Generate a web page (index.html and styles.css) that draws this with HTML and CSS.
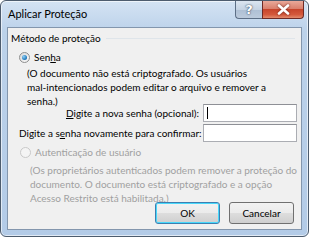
FILE: index.html
```html
<!DOCTYPE html>
<html>
<head>
<meta charset="utf-8">
<link rel="stylesheet" href="styles.css">
</head>
<body>
<div class="window">
  <div class="titlebar">
    <div class="title">Aplicar Proteção</div>
    <div class="tbuttons">
      <div class="tb help">?</div>
      <div class="tb close"><svg width="13" height="11" viewBox="0 0 13 11"><path d="M2 1.5 L11 9.5 M11 1.5 L2 9.5" stroke="#fff" stroke-width="2.6" stroke-linecap="round"/></svg></div>
    </div>
  </div>
  <div class="client">
    <div class="group-head"><span>Método de proteção</span><span class="gline"></span></div>
    <div class="radio-row">
      <span class="radio checked"><span class="dot"></span></span>
      <span>Sen<u>h</u>a</span>
    </div>
    <div class="desc">(O documento não está criptografado. Os usuários<br>mal-intencionados podem editar o arquivo e remover a<br>senha.)</div>
    <div class="field-row">
      <span class="lbl right"><u>D</u>igite a nova senha (opcional):</span>
      <span class="input"><span class="caret"></span></span>
    </div>
    <div class="field-row second">
      <span class="lbl">Digite a s<u>e</u>nha novamente para confirmar:</span>
      <span class="input"></span>
    </div>
    <div class="radio-row disabled">
      <span class="radio off"></span>
      <span>Autenticação de usuário</span>
    </div>
    <div class="desc disabled d2">(Os proprietários autenticados podem remover a proteção do<br>documento. O documento está criptografado e a opção<br>Acesso Restrito está habilitada.)</div>
    <div class="buttons">
      <div class="btn default">OK</div>
      <div class="btn">Cancelar</div>
    </div>
  </div>
</div>
</body>
</html>
```
FILE: styles.css
```css
html, body { margin: 0; padding: 0; background: #ffffff; }
body { font-family: "Lato", "Liberation Sans", sans-serif; font-size: 10px; color: #000; white-space: nowrap; }
.window {
  width: 309px; height: 237px; box-sizing: border-box;
  border: 1px solid #4d5c6e; border-radius: 6px;
  background: linear-gradient(180deg, #d4e3f3 0px, #bcd2ea 30px, #b3cbe7 100%);
  padding: 0 6px 6px 6px;
  display: flex; flex-direction: column;
  box-shadow: inset 0 0 0 1px rgba(255,255,255,0.6);
}
.titlebar { height: 26px; display: flex; justify-content: space-between; align-items: flex-start; flex: none; }
.title { font-size: 11px; padding: 6px 0 0 1px; color: #000; }
.tbuttons { display: flex; margin-right: -2px; }
.tb { height: 18px; box-sizing: border-box; border: 1px solid #5d6f86; border-top: none; display: flex; align-items: center; justify-content: center; }
.help { width: 27px; border-radius: 0 0 0 4px; background: linear-gradient(180deg, #dbe5f0 0%, #c5d3e3 50%, #aebfd4 51%, #bccbdc 100%); color: #fff; font-weight: bold; font-size: 13px; text-shadow: 0 0 2px #3d4f66, 0 0 1px #3d4f66; border-right: none; font-family: "DejaVu Sans", sans-serif; }
.close { width: 42px; border-radius: 0 0 4px 0; border-color: #6e2a25; background: linear-gradient(180deg, #e9a99a 0%, #d9806d 45%, #c7452c 50%, #d4593c 80%, #e28b6d 100%); }
.close svg { filter: drop-shadow(0 0 1px #6b1f14); }
.client {
  flex: 1; background: #f0f0f0; border: 1px solid #8396ad;
  padding: 2px 0 0 0; box-sizing: border-box; overflow: hidden;
}
.group-head { display: flex; align-items: center; padding-left: 3px; height: 16px; }
.gline { flex: 1; height: 0; border-top: 1px solid #dfe5ea; margin: 1px 6px 0 5px; }
.radio-row { display: flex; align-items: center; height: 16px; margin-top: 3px; padding-left: 11px; gap: 4px; }
.radio { width: 11px; height: 11px; border-radius: 50%; box-sizing: border-box; border: 1px solid #8e8f8f; background: linear-gradient(135deg, #d9d9d9, #fafafa); display: flex; align-items: center; justify-content: center; flex: none; }
.radio .dot { width: 5px; height: 5px; border-radius: 50%; background: radial-gradient(circle at 35% 35%, #8fd0f5, #1a73b8 70%, #0d4a86); }
.radio.off { border-color: #c9c9c9; background: #f4f4f4; }
.desc { padding-left: 19px; line-height: 14px; margin-top: 1px; }
.field-row { display: flex; align-items: center; height: 18px; margin-top: -4px; padding-right: 4px; }
.field-row.second { margin-top: 2px; }
.lbl { flex: 1; padding-left: 11px; }
.lbl.right { text-align: right; padding-right: 4px; }
.input { width: 94px; height: 18px; box-sizing: border-box; border: 1px solid #abadb3; border-top-color: #8e9096; background: #fff; position: relative; flex: none; }
.caret { position: absolute; left: 3px; top: 2px; width: 1px; height: 12px; background: #000; }
.disabled { color: #a0a0a0; }
.radio-row.disabled { margin-top: 2px; padding-left: 12px; }
.d2 { padding-left: 22px; margin-top: 3px; }
.buttons { display: flex; justify-content: flex-end; gap: 9px; padding-right: 7px; margin-top: -3px; }
.btn { width: 65px; height: 22px; box-sizing: border-box; border: 1px solid #707070; border-radius: 3px; background: linear-gradient(180deg, #f2f2f2 0%, #ebebeb 50%, #dddddd 51%, #cfcfcf 100%); display: flex; align-items: center; justify-content: center; }
.btn.default { border-color: #3c7fb1; box-shadow: inset 0 0 0 1px #48d8fb; }
u { text-decoration: underline; text-underline-offset: 1px; }
```
